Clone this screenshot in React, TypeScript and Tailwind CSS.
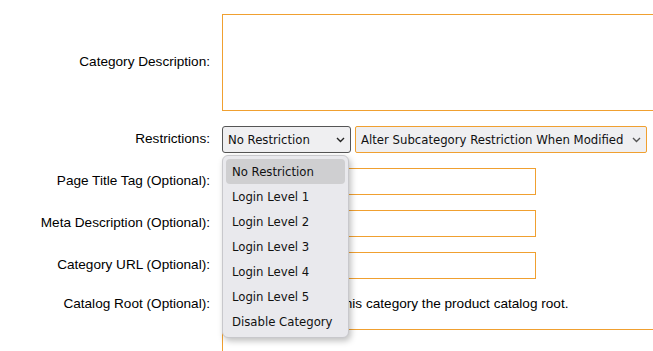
const options = [
  'No Restriction',
  'Login Level 1',
  'Login Level 2',
  'Login Level 3',
  'Login Level 4',
  'Login Level 5',
  'Disable Category',
];

function Chevron({ className }: { className?: string }) {
  return (
    <svg width="9" height="6" viewBox="0 0 9 6" className={className} fill="none">
      <path d="M1 1l3.5 3.5L8 1" stroke="currentColor" strokeWidth="1.4" />
    </svg>
  );
}

function Field() {
  return <div className="h-[27px] w-[314px] border border-[#f0a030] bg-white" />;
}

export default function App() {
  return (
    <div className="h-[351px] w-[653px] overflow-hidden bg-white pt-[14px] font-['Liberation_Sans',Arial,sans-serif] text-[13.6px] text-black">
      <div className="grid grid-cols-[210px_1fr] items-center gap-x-3 gap-y-[15px]">
        <div className="text-right">Category Description:</div>
        <div className="h-[97px] w-[470px] border border-[#f0a030] bg-white" />

        <div className="text-right">Restrictions:</div>
        <div className="flex items-center gap-[4px] font-['DejaVu_Sans_Condensed','DejaVu_Sans',sans-serif] text-[13px] text-[#111]">
          <div className="relative">
            <div className="flex h-[27px] w-[129px] items-center justify-between rounded-[3px] border border-[#555] bg-[#efeff1] pr-[5px] pl-[5px]">
              <span>No Restriction</span>
              <Chevron className="text-[#222]" />
            </div>
            <div className="absolute top-[29px] left-0 z-10 w-[127px] rounded-[6px] border border-[#c8c8cc] bg-[#e9e9ed] px-[3px] pt-[3px] pb-[3px] shadow-[2px_3px_6px_rgba(0,0,0,0.25)]">
              {options.map((o, i) => (
                <div
                  key={o}
                  className={
                    'flex h-[25px] items-center rounded-[4px] pl-[6px] ' +
                    (i === 0 ? 'bg-[#cfcfd1]' : '')
                  }
                >
                  {o}
                </div>
              ))}
            </div>
          </div>
          <div className="flex h-[27px] w-[292px] items-center justify-between rounded-[2px] border border-[#f0a030] bg-[#efeff1] pr-[5px] pl-[5px]">
            <span>Alter Subcategory Restriction When Modified</span>
            <Chevron className="text-[#555]" />
          </div>
        </div>

        <div className="text-right">Page Title Tag (Optional):</div>
        <Field />

        <div className="text-right">Meta Description (Optional):</div>
        <Field />

        <div className="text-right">Category URL (Optional):</div>
        <Field />

        <div className="text-right">Catalog Root (Optional):</div>
        <label className="flex h-[20px] items-center">
          <input type="checkbox" className="m-[3px] h-[13px] w-[13px]" />
          <span className="ml-[63px]">Make this category the product catalog root.</span>
        </label>

        <div />
        <div className="h-[97px] w-[470px] border border-[#f0a030] bg-white" />
      </div>
    </div>
  );
}
